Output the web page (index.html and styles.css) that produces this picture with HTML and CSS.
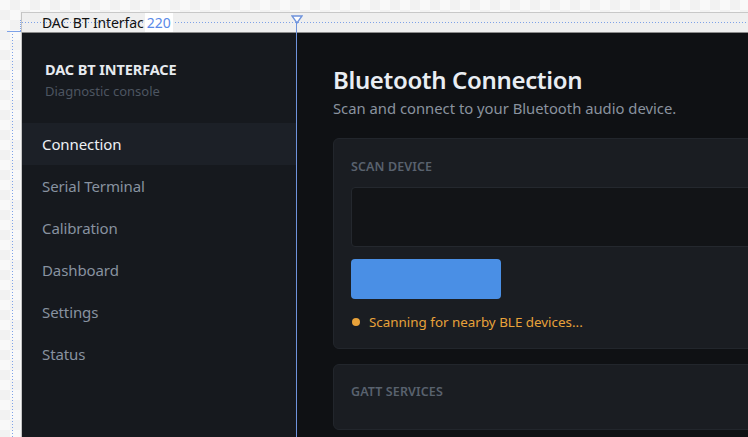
FILE: index.html
```html
<!DOCTYPE html>
<html lang="en">
<head>
<meta charset="utf-8">
<title>DAC BT Interface</title>
<link rel="stylesheet" href="styles.css">
</head>
<body>
<div class="canvas">
  <div class="frame">
    <div class="frame-bar">
      <span class="frame-name">DAC BT Interfac</span>
      <span class="frame-size">220</span>
    </div>
    <div class="app">
      <aside class="sidebar">
        <div class="brand">
          <div class="brand-title">DAC BT INTERFACE</div>
          <div class="brand-sub">Diagnostic console</div>
        </div>
        <nav class="nav">
          <div class="nav-item active">Connection</div>
          <div class="nav-item">Serial Terminal</div>
          <div class="nav-item">Calibration</div>
          <div class="nav-item">Dashboard</div>
          <div class="nav-item">Settings</div>
          <div class="nav-item">Status</div>
        </nav>
      </aside>
      <main class="main">
        <h1 class="title">Bluetooth Connection</h1>
        <p class="subtitle">Scan and connect to your Bluetooth audio device.</p>
        <section class="card">
          <div class="card-label">SCAN DEVICE</div>
          <div class="input"></div>
          <div class="btn"></div>
          <div class="status"><span class="dot"></span>Scanning for nearby BLE devices...</div>
        </section>
        <section class="card card-gatt">
          <div class="card-label">GATT SERVICES</div>
        </section>
      </main>
    </div>
  </div>
  <div class="guide-h"></div>
  <div class="guide-v-left"></div>
  <div class="corner-h"></div>
  <div class="corner-v"></div>
  <div class="guide-v-blue"></div>
  <svg class="marker" width="12" height="9" viewBox="0 0 12 9"><path d="M1 1 H11 L6 8 Z" fill="#ffffff" stroke="#6f93dc" stroke-width="1.3"/></svg>
</div>
</body>
</html>
```

FILE: styles.css
```css
* { box-sizing: border-box; }
html, body { margin: 0; padding: 0; }
body {
  width: 748px;
  height: 437px;
  overflow: hidden;
  font-family: "Noto Sans", "Open Sans", sans-serif;
}
.canvas {
  position: relative;
  width: 748px;
  height: 437px;
  overflow: hidden;
  background-color: #f9f9f9;
  background-image:
    linear-gradient(45deg, #f2f2f2 25%, transparent 25%, transparent 75%, #f2f2f2 75%),
    linear-gradient(45deg, #f2f2f2 25%, transparent 25%, transparent 75%, #f2f2f2 75%);
  background-size: 20px 20px;
  background-position: 0 0, 10px 10px;
}
.frame {
  position: absolute;
  left: 21px;
  top: 12px;
  width: 760px;
  height: 440px;
  border-left: 1px solid #c4c4c4;
  display: flex;
  flex-direction: column;
}
.frame-bar {
  height: 21px;
  background: #efefef;
  border-top: 1px solid #c8c8c8;
  border-bottom: 1px solid #8c8c8c;
  display: flex;
  align-items: stretch;
  font-family: "Noto Sans", sans-serif;
  font-size: 14px;
  color: #111;
  flex: none;
}
.frame-name {
  margin-left: 20px;
  white-space: nowrap;
  line-height: 19px;
  letter-spacing: -0.1px;
  position: relative;
  z-index: 2;
}
.frame-size {
  background: #fff;
  color: #5a8ae8;
  font-size: 14px;
  padding: 0 2px;
  margin-left: 1px;
  line-height: 19px;
  position: relative;
  z-index: 2;
}
.app {
  flex: 1;
  display: flex;
  background: #0f1114;
}
.sidebar {
  width: 275px;
  flex: none;
  background: #16191e;
}
.brand {
  padding: 27px 0 0 23px;
  height: 90px;
}
.brand-title {
  font-size: 14.5px;
  font-weight: 700;
  color: #e6eaef;
  line-height: 18px;
  letter-spacing: -0.1px;
}
.brand-sub {
  font-size: 13px;
  color: #4d5561;
  line-height: 18px;
  margin-top: 4px;
}
.nav { display: flex; flex-direction: column; }
.nav-item {
  height: 42px;
  display: flex;
  align-items: center;
  padding-left: 20px;
  font-size: 15px;
  color: #8892a0;
  letter-spacing: -0.1px;
}
.nav-item.active {
  background: #1c2027;
  color: #eef1f5;
}
.main {
  flex: 1;
  padding: 31px 0 0 36px;
  display: flex;
  flex-direction: column;
}
.title {
  margin: 0;
  font-size: 24px;
  font-weight: 600;
  color: #e9edf2;
  line-height: 32px;
  letter-spacing: -0.35px;
}
.subtitle {
  margin: 2px 0 0;
  font-size: 14.8px;
  color: #8a939f;
  line-height: 20px;
}
.card {
  margin-top: 20px;
  width: 440px;
  background: #1a1d22;
  border: 1px solid #22262c;
  border-radius: 6px;
  padding: 20px 0 17px 17px;
  display: flex;
  flex-direction: column;
}
.card-label {
  font-size: 12.5px;
  font-weight: 600;
  color: #59626e;
  line-height: 16px;
  letter-spacing: 0.1px;
}
.input {
  margin-top: 12px;
  height: 60px;
  background: #121417;
  border: 1px solid #24282e;
  border-radius: 4px;
  margin-right: -20px;
}
.btn {
  margin-top: 12px;
  width: 150px;
  height: 40px;
  background: #4a8fe5;
  border-radius: 4px;
}
.status {
  margin-top: 14px;
  display: flex;
  align-items: center;
  font-size: 13.4px;
  color: #e8a23a;
  line-height: 18px;
}
.dot {
  width: 8px;
  height: 8px;
  border-radius: 50%;
  background: #e8a23a;
  margin: 0 9px 0 1px;
}
.card-gatt {
  margin-top: 15px;
  height: 66px;
  padding-top: 19px;
}
.guide-h {
  position: absolute;
  left: 22px;
  right: 0;
  top: 22px;
  height: 1px;
  background-image: linear-gradient(90deg, #7ea2e8 50%, transparent 50%);
  background-size: 3px 1px;
}
.guide-v-left {
  position: absolute;
  left: 12px;
  top: 31px;
  bottom: 0;
  width: 1px;
  background-image: linear-gradient(180deg, #7ea2e8 50%, transparent 50%);
  background-size: 1px 3px;
}
.corner-h {
  position: absolute;
  left: 7px;
  top: 31px;
  width: 14px;
  height: 1px;
  background: #7ea2e8;
}
.corner-v {
  position: absolute;
  left: 20px;
  top: 20px;
  width: 1px;
  height: 12px;
  background-image: linear-gradient(180deg, #7ea2e8 50%, transparent 50%);
  background-size: 1px 2px;
}
.guide-v-blue {
  position: absolute;
  left: 296px;
  top: 22px;
  bottom: 0;
  width: 1px;
  background: #6f93dc;
}
.marker {
  position: absolute;
  left: 291px;
  top: 15px;
}
```
